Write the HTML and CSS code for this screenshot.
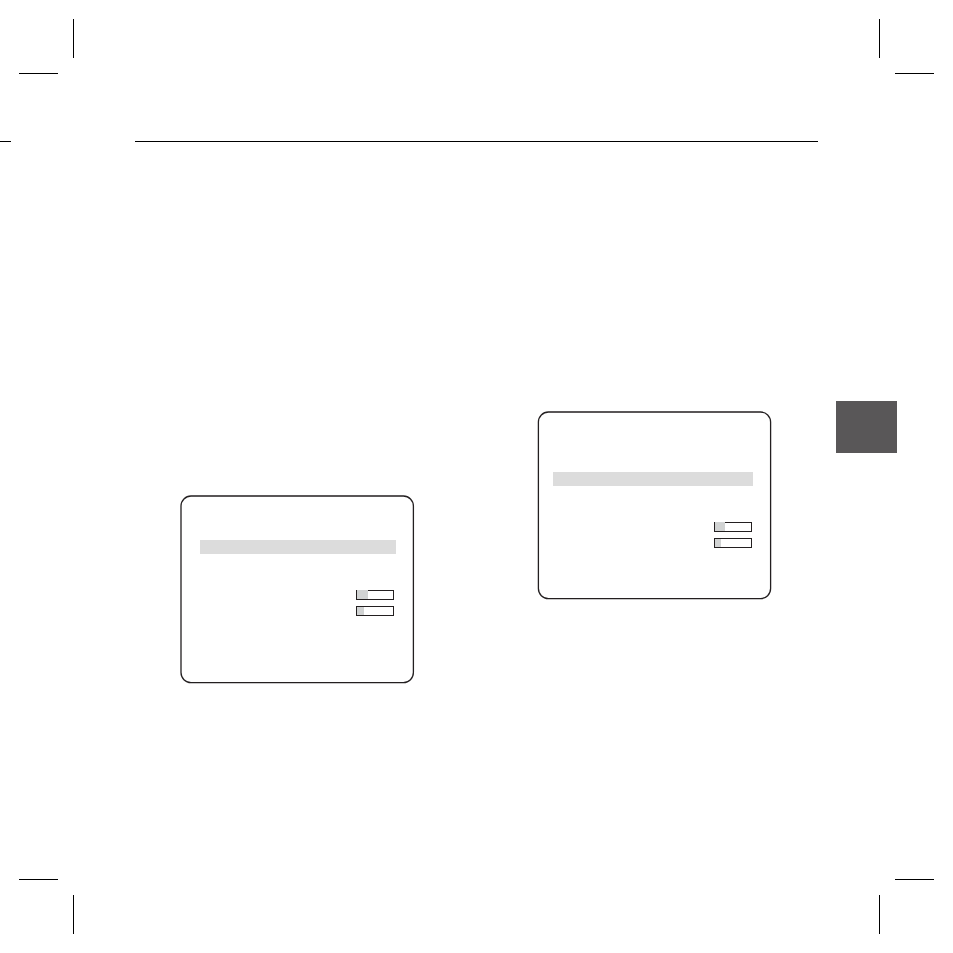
FILE: index.html
```html
<!DOCTYPE html>
<html lang="en">
<head>
    <meta charset="UTF-8">
    <meta name="viewport" content="width=device-width, initial-scale=1.0">
    <title>Menu Screens</title>
    <link rel="stylesheet" href="styles.css">
</head>
<body>

    <div class="crop-row" aria-hidden="true">
        <svg class="crop" viewBox="0 0 55 55"><path d="M54 0h1v39h-1zM0 54h39v1H0z"/></svg>
        <svg class="crop" viewBox="0 0 55 55"><path d="M0 0h1v39H0zM16 54h39v1H16z"/></svg>
    </div>

    <header class="header">
        <div class="stub"></div>
        <div class="rule"></div>
    </header>

    <main class="content">
        <section class="panel panel-left">
            <svg class="frame" viewBox="0 0 235 189" aria-hidden="true">
                <rect x="1" y="1" width="232.4" height="186.6" rx="10"/>
            </svg>
            <div class="menu">
                <div class="selected"></div>
                <div class="meters">
                    <div class="meter"><div class="fill fill-over" style="width: 31%"></div></div>
                    <div class="meter"><div class="fill" style="width: 20%"></div></div>
                </div>
            </div>
        </section>

        <section class="panel panel-right">
            <svg class="frame" viewBox="0 0 235 189" aria-hidden="true">
                <rect x="1.4" y="1" width="232.2" height="186.6" rx="10"/>
            </svg>
            <div class="menu">
                <div class="selected"></div>
                <div class="meters">
                    <div class="meter"><div class="fill fill-over" style="width: 28%"></div></div>
                    <div class="meter"><div class="fill" style="width: 17%"></div></div>
                </div>
            </div>
        </section>

        <div class="tab"></div>
    </main>

    <div class="crop-row" aria-hidden="true">
        <svg class="crop" viewBox="0 0 55 55"><path d="M54 16h1v39h-1zM0 0h39v1H0z"/></svg>
        <svg class="crop" viewBox="0 0 55 55"><path d="M0 16h1v39H0zM16 0h39v1H16z"/></svg>
    </div>

</body>
</html>
```

FILE: styles.css
```css
* {
    box-sizing: border-box;
}
body {
    display: flex;
    flex-direction: column;
    min-height: 100vh;
    margin: 0;
    padding: 19px 0;
    background-color: #fff;
    font-family: "Liberation Sans", Arial, sans-serif;
}
.crop-row {
    display: flex;
    justify-content: space-between;
    padding: 0 19px;
}
.crop {
    display: block;
    width: 55px;
    height: 55px;
    fill: #000;
}
.header {
    display: flex;
    gap: 124px;
    margin-top: 67px;
    padding-right: 135px;
}
.stub {
    width: 11px;
    height: 1px;
    background-color: #000;
}
.rule {
    flex: 1;
    height: 1px;
    background-color: #000;
}
.content {
    flex: 1;
    display: grid;
    grid-template-columns: 1fr 299px 61px;
    align-items: start;
    padding: 0 56px 0 180px;
}
.panel {
    display: grid;
    width: 235px;
}
.panel-left {
    margin-top: 353px;
}
.panel-right {
    margin-top: 269px;
}
/* frame and menu share one grid cell */
.frame,
.menu {
    grid-area: 1 / 1;
}
.frame {
    display: block;
    width: 100%;
    fill: none;
    stroke: #231f20;
    stroke-width: 1.3;
}
.menu {
    padding: 45px 19px 0 20px;
}
.panel-right .menu {
    padding: 61px 19px 0 16px;
}
.selected {
    height: 14px;
    background-color: #dcdcdc;
}
.meters {
    display: flex;
    flex-direction: column;
    align-items: flex-end;
    gap: 6px;
    margin-top: 36px;
    padding-right: 2px;
}
.panel-right .meters {
    padding-right: 1px;
}
.meter {
    display: flex;
    width: 38px;
    height: 10px;
    border: 1px solid #231f20;
    background-color: #fff;
}
.fill {
    background-color: #d1d3d3;
}
.fill-over {
    margin-top: -1px;
}
.tab {
    height: 52px;
    margin-top: 259px;
    background-color: #595758;
}
```
